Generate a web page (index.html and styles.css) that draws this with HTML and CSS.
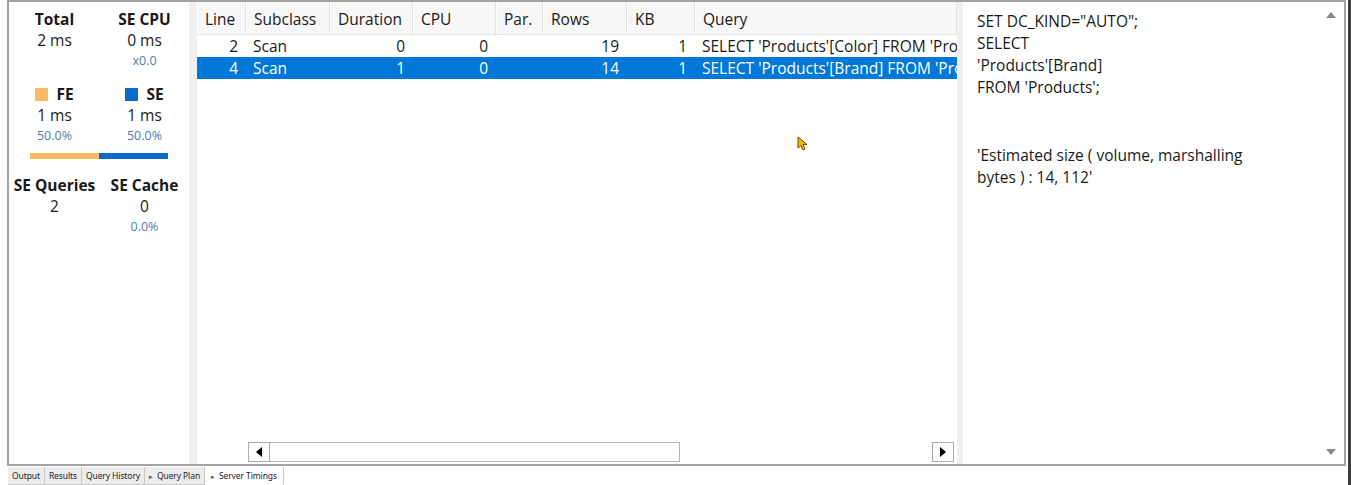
FILE: index.html
```html
<!DOCTYPE html>
<html>
<head>
<meta charset="utf-8">
<link rel="stylesheet" href="styles.css">
</head>
<body>
<div class="page">
  <div class="main">
    <div class="frame">
      <div class="stats">
        <div class="stat-grid">
          <div class="cell"><div class="lbl">Total</div><div class="val">2 ms</div></div>
          <div class="cell"><div class="lbl">SE CPU</div><div class="val">0 ms</div><div class="sub">x0.0</div></div>
          <div class="cell cell-gap"><div class="lbl"><span class="sq sq-fe"></span>FE</div><div class="val">1 ms</div><div class="sub">50.0%</div></div>
          <div class="cell cell-gap"><div class="lbl"><span class="sq sq-se"></span>SE</div><div class="val">1 ms</div><div class="sub">50.0%</div></div>
        </div>
        <div class="ratio"><div class="ratio-fe"></div><div class="ratio-se"></div></div>
        <div class="stat-grid grid-bottom">
          <div class="cell"><div class="lbl">SE Queries</div><div class="val">2</div></div>
          <div class="cell"><div class="lbl">SE Cache</div><div class="val">0</div><div class="sub">0.0%</div></div>
        </div>
      </div>
      <div class="splitter s1"></div>
      <div class="grid">
        <div class="thead">
          <div class="th c-line">Line</div>
          <div class="th c-sub">Subclass</div>
          <div class="th c-dur">Duration</div>
          <div class="th c-cpu">CPU</div>
          <div class="th c-par">Par.</div>
          <div class="th c-rows">Rows</div>
          <div class="th c-kb">KB</div>
          <div class="th c-query">Query</div>
        </div>
        <div class="tbody">
          <div class="tr">
            <div class="td c-line num">2</div>
            <div class="td c-sub">Scan</div>
            <div class="td c-dur num">0</div>
            <div class="td c-cpu num">0</div>
            <div class="td c-par num"></div>
            <div class="td c-rows num">19</div>
            <div class="td c-kb num">1</div>
            <div class="td c-query">SELECT 'Products'[Color] FROM 'Products';</div>
          </div>
          <div class="tr selected">
            <div class="td c-line num">4</div>
            <div class="td c-sub">Scan</div>
            <div class="td c-dur num">1</div>
            <div class="td c-cpu num">0</div>
            <div class="td c-par num"></div>
            <div class="td c-rows num">14</div>
            <div class="td c-kb num">1</div>
            <div class="td c-query">SELECT 'Products'[Brand] FROM 'Products';</div>
          </div>
        </div>
        <div class="hscroll">
          <div class="sbtn"><svg width="6" height="10" viewBox="0 0 6 10"><path d="M6 0 L0 5 L6 10 Z" fill="#000"/></svg></div>
          <div class="thumb"></div>
          <div class="track"></div>
          <div class="sbtn"><svg width="6" height="10" viewBox="0 0 6 10"><path d="M0 0 L6 5 L0 10 Z" fill="#000"/></svg></div>
        </div>
      </div>
      <div class="splitter s2"></div>
      <div class="detail">
        <div class="detail-text">
          <div>SET DC_KIND="AUTO";</div>
          <div>SELECT</div>
          <div>'Products'[Brand]</div>
          <div>FROM 'Products';</div>
          <div class="blank"></div>
          <div class="est">'Estimated size ( volume, marshalling bytes ) : 14, 112'</div>
        </div>
        <div class="vscroll">
          <svg width="10" height="6" viewBox="0 0 10 6"><path d="M0 6 L5 0 L10 6 Z" fill="#8a8a8a"/></svg>
          <svg width="10" height="6" viewBox="0 0 10 6"><path d="M0 0 L5 6 L10 0 Z" fill="#8a8a8a"/></svg>
        </div>
      </div>
      <svg class="cursor" width="12" height="16" viewBox="0 0 12 16"><path d="M1 1 L1 12 L4 9.5 L6 14 L8 13 L6 8.5 L10 8.5 Z" fill="#f2b705" stroke="#6b4a00" stroke-width="1"/></svg>
    </div>
    <div class="tabs">
      <div class="tab">Output</div>
      <div class="tab">Results</div>
      <div class="tab">Query History</div>
      <div class="tab"><span class="tri">&#9656;</span>Query Plan</div>
      <div class="tab active"><span class="tri">&#9656;</span>Server Timings</div>
    </div>
  </div>
  <div class="edge"></div>
</div>
</body>
</html>
```

FILE: styles.css
```css
* { box-sizing: border-box; }
html, body { margin: 0; padding: 0; background: #fff; }
body {
  font-family: "Open Sans", "Noto Sans", sans-serif;
  color: #1a1a1a;
  width: 1351px;
  height: 485px;
  overflow: hidden;
}
.page { display: flex; height: 485px; }
.main { width: 1346px; padding-left: 7px; display: flex; flex-direction: column; }
.edge { width: 5px; border-left: 2px solid #fff; border-right: 3px solid #3c3c3c; }

.frame {
  position: relative;
  height: 466px;
  border: 2px solid #a3a3a3;
  display: flex;
  background: #fff;
}

/* stats */
.stats { width: 180px; padding-top: 7px; }
.stat-grid { display: grid; grid-template-columns: 91px 89px; }
.cell { text-align: center; }
.cell-gap { margin-top: 13px; }
.lbl { font-weight: 700; font-size: 15.5px; line-height: 20px; display: flex; justify-content: center; align-items: center; }
.val { font-size: 15.5px; line-height: 22px; }
.sub { font-size: 12.5px; line-height: 20px; color: #4f7cb5; }
.sq { display: inline-block; width: 13px; height: 13px; margin-right: 8px; }
.sq-fe { background: #fdb864; }
.sq-se { background: #0a6cc8; }
.ratio { display: flex; margin: 7px 0 0 21px; width: 138px; height: 6px; }
.ratio-fe { flex: 1; background: #fdb864; }
.ratio-se { flex: 1; background: #0a6cc8; }
.grid-bottom { margin-top: 16px; }

.splitter { background: #f0f0f0; }
.s1 { width: 8px; }
.s2 { width: 6px; }

/* grid */
.grid { width: 760px; display: flex; flex-direction: column; }
.thead { display: flex; height: 33px; background: #f7f7f7; border-bottom: 1px solid #e6e6e6; }
.th {
  font-size: 15.5px; line-height: 22px; padding: 6px 0 0 7px;
  border-right: 1px solid #e2e2e2; border-left: 1px solid #fff;
  white-space: nowrap; overflow: hidden;
}
.c-line { width: 49px; }
.c-sub { width: 84px; }
.c-dur { width: 83px; }
.c-cpu { width: 83px; }
.c-par { width: 47px; }
.c-rows { width: 84px; }
.c-kb { width: 68px; }
.c-query { flex: 1; }
.tbody { flex: 1; padding-top: 0; }
.tr { display: flex; height: 22px; }
.td { font-size: 15.5px; line-height: 22px; padding: 0 8px 0 7px; white-space: nowrap; overflow: hidden; }
.td.num { text-align: right; }
.td.c-query { text-overflow: clip; padding-right: 0; }
.tr.selected { background: #0078d7; color: #fff; }

.hscroll { display: flex; height: 20px; margin: 0 3px 2px 51px; }
.sbtn {
  width: 22px; height: 20px; border: 1px solid #adadad; background: #fff;
  display: flex; align-items: center; justify-content: center;
}
.thumb { width: 410px; height: 20px; border: 1px solid #b5b5b5; border-left: none; background: #fff; }
.track { flex: 1; }

/* detail */
.detail { flex: 1; display: flex; }
.detail-text { flex: 1; padding: 8px 0 0 14px; font-size: 15.5px; line-height: 22px; }
.detail-text .blank { height: 46px; }
.detail-text .est { width: 290px; }
.vscroll {
  width: 18px; display: flex; flex-direction: column; justify-content: space-between; align-items: center;
  padding: 10px 0 9px 0; margin-right: 4px;
}

.cursor { position: absolute; left: 788px; top: 134px; }

/* tabs */
.tabs { display: flex; height: 18px; padding-left: 1px; margin-top: 1px; }
.tab {
  font-size: 8.5px; line-height: 17px; padding: 0 4px; background: #ececec;
  border-right: 1px solid #c8c8c8; border-bottom: 1px solid #c8c8c8; color: #222;
  font-family: "Noto Sans", sans-serif; letter-spacing: -0.1px;
}
.tab.active { background: #fff; border-bottom-color: #fff; padding: 0 6px; }
.tri { font-size: 7px; color: #555; margin-right: 4px; }
```
